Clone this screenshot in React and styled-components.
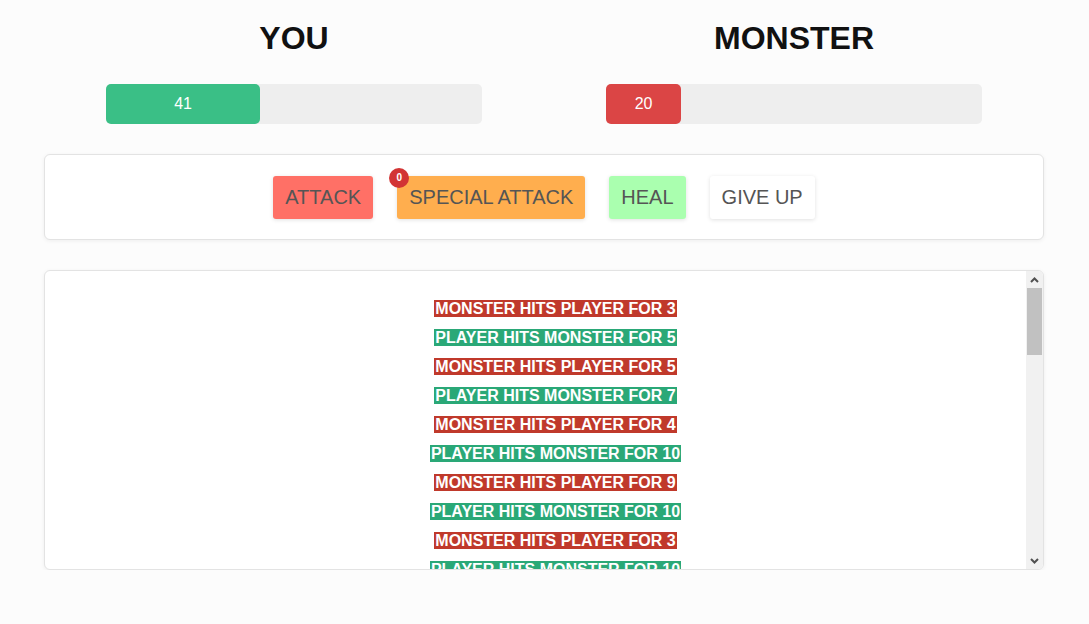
import React, { useState } from 'react';
import styled, { createGlobalStyle } from 'styled-components';

const GlobalStyle = createGlobalStyle`
  html, body {
    margin: 0;
    padding: 0;
    background: #fcfcfc;
    font-family: "Liberation Sans", Arial, sans-serif;
  }
`;

const Page = styled.div`
  width: 1000px;
  margin: 0 44px;
`;

const Fighters = styled.section`
  display: grid;
  grid-template-columns: 1fr 1fr;
`;

const Fighter = styled.div`
  text-align: center;
`;

const Name = styled.h1`
  font-size: 32px;
  font-weight: bold;
  color: #111;
  margin: 20px 0 27px;
  line-height: 37px;
`;

const HealthBar = styled.div`
  width: 376px;
  height: 40px;
  margin: 0 auto;
  background: #eeeeee;
  border-radius: 5px;
  display: flex;
`;

const HealthFill = styled.div`
  height: 100%;
  background: ${p => p.$color};
  border-radius: 5px;
  color: #fff;
  font-size: 16px;
  display: flex;
  align-items: center;
  justify-content: center;
`;

const Panel = styled.section`
  box-sizing: border-box;
  background: #fff;
  border: 1px solid #e3e3e3;
  border-radius: 6px;
  box-shadow: 0 1px 4px rgba(0, 0, 0, 0.06);
`;

const Controls = styled(Panel)`
  margin-top: 30px;
  height: 86px;
  display: flex;
  align-items: center;
  justify-content: center;
  gap: 24px;
`;

const Button = styled.button`
  position: relative;
  height: 43px;
  padding: 0 12px;
  border: none;
  border-radius: 3px;
  background: ${p => p.$bg};
  color: #555;
  font-family: inherit;
  font-size: 20px;
  box-shadow: 0 1px 4px rgba(0, 0, 0, 0.12);
  cursor: pointer;
`;

const Badge = styled.span`
  position: absolute;
  top: -8px;
  left: -8px;
  width: 20px;
  height: 20px;
  border-radius: 50%;
  background: #d23434;
  color: #fff;
  font-size: 10px;
  font-weight: bold;
  line-height: 20px;
  text-align: center;
`;

const Log = styled(Panel)`
  margin-top: 30px;
  height: 300px;
  display: flex;
  overflow: hidden;
`;

const LogScroll = styled.div`
  flex: 1;
  overflow-y: scroll;
  scrollbar-width: none;
  &::-webkit-scrollbar {
    display: none;
  }
`;

// drawn scrollbar, the screenshot browser hides native ones
const ScrollBar = styled.div`
  width: 17px;
  flex: none;
  background: #f1f1f1;
  display: flex;
  flex-direction: column;
`;

const ScrollButton = styled.div`
  height: 17px;
  display: flex;
  align-items: center;
  justify-content: center;
`;

const ScrollTrack = styled.div`
  flex: 1;
`;

const ScrollThumb = styled.div`
  height: 67px;
  margin: 0 1px;
  background: #c1c1c1;
`;

const Chevron = ({ up }) => (
  <svg width="9" height="6" viewBox="0 0 9 6">
    <path
      d={up ? 'M1 5 L4.5 1.5 L8 5' : 'M1 1 L4.5 4.5 L8 1'}
      fill="none"
      stroke="#505050"
      strokeWidth="2"
    />
  </svg>
);

const LogList = styled.ul`
  list-style: none;
  margin: 0;
  padding: 29px 0 10px 40px;
  text-align: center;
`;

const LogItem = styled.li`
  line-height: 18px;
  margin-bottom: 11px;
`;

const LogText = styled.span`
  background: ${p => (p.$monster ? '#c0392b' : '#2aa877')};
  color: #fff;
  font-weight: bold;
  font-size: 16px;
  padding: 0 1px;
`;

const hits = [3, 5, 5, 7, 4, 10, 9, 10, 3, 10, 6, 8, 5, 4, 2, 9, 7, 6, 8, 5, 3, 10, 4, 7, 6, 5, 9, 8, 2, 6, 5, 4, 7, 9, 3, 8, 6, 5, 4, 7];

export default function App() {
  const [player] = useState(41);
  const [monster] = useState(20);

  return (
    <>
      <GlobalStyle />
      <Page>
        <Fighters>
          <Fighter>
            <Name>YOU</Name>
            <HealthBar>
              <HealthFill $color="#3abf86" style={{ width: `${player}%` }}>{player}</HealthFill>
            </HealthBar>
          </Fighter>
          <Fighter>
            <Name>MONSTER</Name>
            <HealthBar>
              <HealthFill $color="#db4545" style={{ width: `${monster}%` }}>{monster}</HealthFill>
            </HealthBar>
          </Fighter>
        </Fighters>

        <Controls>
          <Button $bg="#ff7066">ATTACK</Button>
          <Button $bg="#ffae4e">
            <Badge>0</Badge>
            SPECIAL ATTACK
          </Button>
          <Button $bg="#aaffaf">HEAL</Button>
          <Button $bg="#ffffff">GIVE UP</Button>
        </Controls>

        <Log>
          <LogScroll>
            <LogList>
              {hits.map((v, i) => (
                <LogItem key={i}>
                  <LogText $monster={i % 2 === 0}>
                    {i % 2 === 0 ? `MONSTER HITS PLAYER FOR ${v}` : `PLAYER HITS MONSTER FOR ${v}`}
                  </LogText>
                </LogItem>
              ))}
            </LogList>
          </LogScroll>
          <ScrollBar>
            <ScrollButton><Chevron up /></ScrollButton>
            <ScrollTrack>
              <ScrollThumb />
            </ScrollTrack>
            <ScrollButton><Chevron /></ScrollButton>
          </ScrollBar>
        </Log>
      </Page>
    </>
  );
}
